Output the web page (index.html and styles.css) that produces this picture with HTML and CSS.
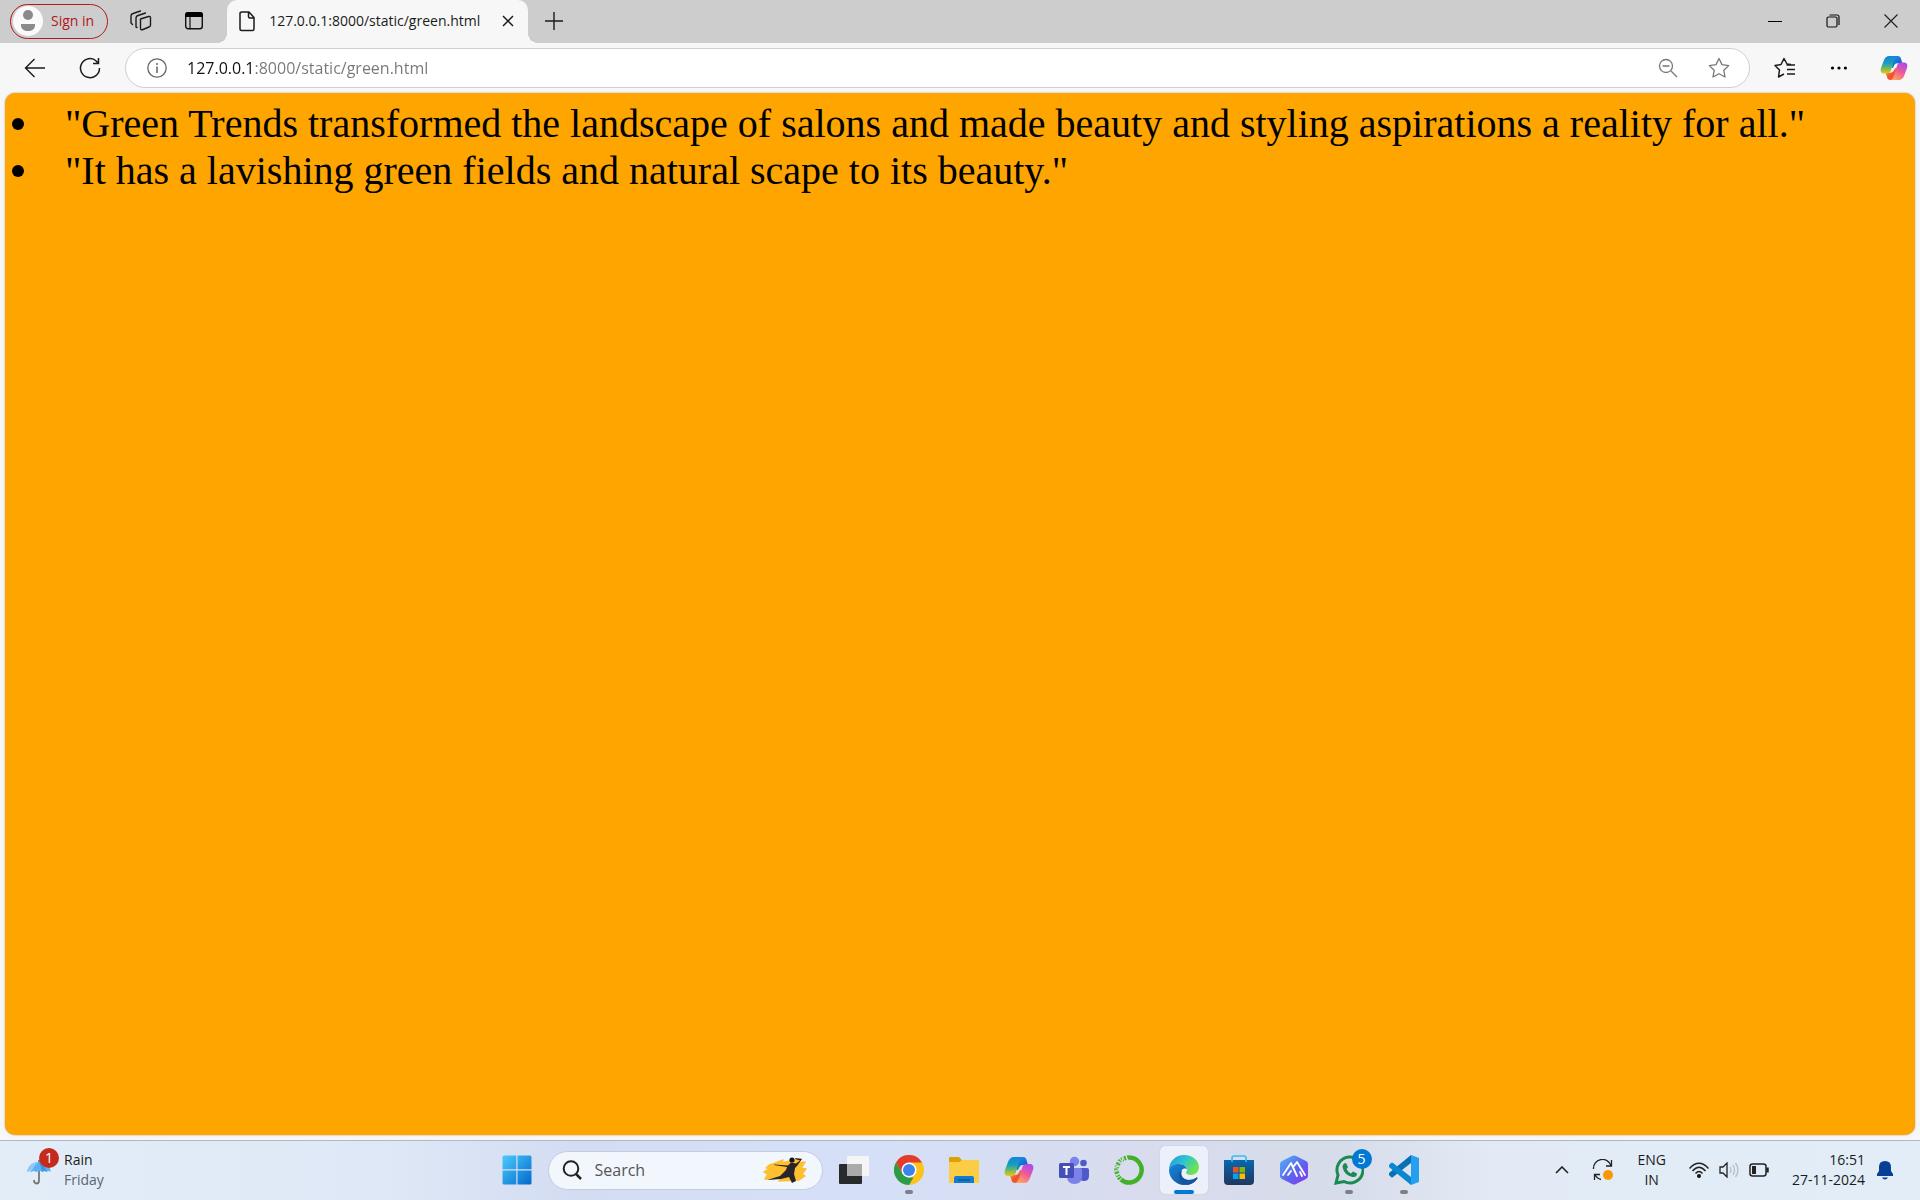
FILE: index.html
```html
<!DOCTYPE html>
<html lang="en">
<head>
<meta charset="utf-8">
<title>127.0.0.1:8000/static/green.html</title>
<link rel="stylesheet" href="styles.css">
</head>
<body>
<svg class="defs" width="0" height="0" aria-hidden="true">
  <defs>
    <linearGradient id="cpLeft" x1="0" y1="0" x2="0" y2="1"><stop offset="0" stop-color="#1784dc"/><stop offset=".4" stop-color="#159ec0"/><stop offset=".7" stop-color="#6fba62"/><stop offset="1" stop-color="#f0c70a"/></linearGradient>
    <linearGradient id="cpTop" x1="0" y1="0" x2="1" y2="1"><stop offset="0" stop-color="#18a6ec"/><stop offset="1" stop-color="#1747c6"/></linearGradient>
    <linearGradient id="cpRight" x1=".8" y1="0" x2=".3" y2="1"><stop offset="0" stop-color="#a64af0"/><stop offset=".5" stop-color="#ec5a9a"/><stop offset="1" stop-color="#ffa45c"/></linearGradient>
    <linearGradient id="cpBottom" x1="0" y1="0" x2="1" y2="1"><stop offset="0" stop-color="#ffb52e"/><stop offset=".5" stop-color="#ee5030"/><stop offset="1" stop-color="#f0705a"/></linearGradient>
    <symbol id="copilot" viewBox="0 0 30 28">
      <path fill="url(#cpTop)" d="M9 1h10c2 0 3 1 3.500 3L24 9h-5c-3 0-4 2-5 5l-5-2z"/>
      <path fill="url(#cpBottom)" d="M21 27H11c-2 0-3-1-3.500-3L6 19h5c3 0 4-2 5-5l5 2z"/>
      <path fill="url(#cpLeft)" d="M10 1h9c-2 0-3 2-4 5l-3 10c-1 3-2 4-5 4H4c-3 0-4-3-3-6L4 6c1-3 3-5 6-5z"/>
      <path fill="url(#cpRight)" d="M20 27h-9c2 0 3-2 4-5l3-10c1-3 2-4 5-4h3c3 0 4 3 3 6l-3 8c-1 3-3 5-6 5z"/>
    </symbol>
  </defs>
</svg>

<header class="tabstrip">
  <button class="signin"><span class="avatar"><svg width="30" height="30" viewBox="0 0 30 30"><circle cx="15" cy="9" r="5" fill="#8a8a8a"/><path d="M8 18h14v1c0 4-3 6-7 6s-7-2-7-6z" fill="#8a8a8a"/></svg></span>Sign in</button>
  <button class="icon-btn strip-btn" aria-label="Workspaces"><svg width="22" height="22" viewBox="0 0 22 22" fill="none" stroke="#1b1b1b" stroke-width="1.400" stroke-linejoin="round" stroke-linecap="round"><path d="M10.500 9l8-2.500q2-.5 2 1.500v7q0 1.500-1.500 2l-6 2.500q-2.500 1-2.500-1.500z"/><path d="M7 17.500l-1-.5V8q0-2 2-2.500L15.500 3"/><path d="M2.500 14.500L1 13V6q0-2 2-2.500L10.500 1"/></svg></button>
  <button class="icon-btn strip-btn" aria-label="Tab actions"><svg width="20" height="20" viewBox="0 0 20 20"><rect x="1.700" y="1.700" width="16.600" height="16" rx="2.500" fill="none" stroke="#111" stroke-width="1.400"/><path d="M1 6V4q0-3 3-3h12q3 0 3 3v2z" fill="#000"/><path d="M6 6v12" stroke="#111" stroke-width="1.200"/></svg></button>
  <div class="tab">
    <svg width="18" height="22" viewBox="0 0 18 22" fill="none" stroke="#1b1b1b" stroke-width="1.500" stroke-linejoin="round"><path d="M4 2h7l5 5.500V19q0 1.500-1.500 1.500h-11Q2 20.500 2 19V3.500Q2 2 4 2zM10.500 2v4.500q0 1.500 1.500 1.500h4"/></svg>
    <span class="tab-title">127.0.0.1:8000/static/green.html</span>
    <button class="icon-btn" aria-label="Close tab"><svg width="12" height="12" viewBox="0 0 12 12" stroke="#1b1b1b" stroke-width="1.500"><path d="M1 1l10 10M11 1L1 11"/></svg></button>
  </div>
  <button class="icon-btn new-tab" aria-label="New tab"><svg width="18" height="18" viewBox="0 0 18 18" stroke="#1b1b1b" stroke-width="1.400"><path d="M9 0v18M0 9h18"/></svg></button>
  <div class="window-controls">
    <button class="icon-btn" aria-label="Minimise"><svg width="14" height="14" viewBox="0 0 14 14" stroke="#000"><path d="M0 7.500h14"/></svg></button>
    <button class="icon-btn" aria-label="Restore"><svg width="14" height="14" viewBox="0 0 14 14" fill="none" stroke="#111" stroke-width="1.200"><rect x="1" y="3" width="10" height="10" rx="1.500"/><path d="M3.500 1H11q2 0 2 2v8"/></svg></button>
    <button class="icon-btn" aria-label="Close"><svg width="14" height="14" viewBox="0 0 14 14" stroke="#222" stroke-width="1.200"><path d="M.5.5l13 13M13.500.5l-13 13"/></svg></button>
  </div>
</header>

<nav class="toolbar">
  <button class="icon-btn tool-btn" aria-label="Back"><svg width="22" height="22" viewBox="0 0 22 22" fill="none" stroke="#1b1b1b" stroke-width="1.400"><path d="M21 11H2M10.500 2L1.500 11l9 9"/></svg></button>
  <button class="icon-btn tool-btn" aria-label="Refresh"><svg width="22" height="22" viewBox="0 0 22 22" fill="none" stroke="#1b1b1b" stroke-width="1.500"><path d="M20.500 11A9.500 9.500 0 1 1 17.500 4.200L19 6M19.500 1v5.500H14"/></svg></button>
  <div class="address">
    <button class="icon-btn" aria-label="Site information"><svg width="20" height="20" viewBox="0 0 20 20" fill="none" stroke="#666" stroke-width="1.300"><circle cx="10" cy="10" r="9.200"/><path d="M10 8.500V15M10 5v2" stroke-width="1.500"/></svg></button>
    <input class="url" type="text" aria-label="Address" value="127.0.0.1:8000/static/green.html">
    <button class="icon-btn" aria-label="Zoom"><svg width="20" height="20" viewBox="0 0 20 20" fill="none" stroke="#777" stroke-width="1.300"><circle cx="8" cy="8" r="6.500"/><path d="M4.500 8h7M13 13l6 6"/></svg></button>
    <button class="icon-btn" aria-label="Add to favourites"><svg width="22" height="22" viewBox="0 0 22 22" fill="none" stroke="#777" stroke-width="1.300" stroke-linejoin="round"><path d="M11 1.500l3 6.100 6.700 1-4.900 4.700 1.200 6.700-6-3.200L5 20l1.200-6.700L1.300 8.600l6.700-1z"/></svg></button>
  </div>
  <div class="toolbar-end">
    <button class="icon-btn" aria-label="Favourites"><svg width="22" height="22" viewBox="0 0 22 22" fill="none" stroke="#1b1b1b" stroke-width="1.500" stroke-linejoin="round"><path d="M17 7.500l-4-.5-3-5.500-3 6-6 1 4.500 4.500L4.500 20l5.500-3M12.500 8H21M13 12.500h8M13 17h8"/></svg></button>
    <button class="icon-btn" aria-label="Settings and more"><svg width="18" height="6" viewBox="0 0 18 6"><circle cx="3.500" cy="3" r="1.600"/><circle cx="10" cy="3" r="1.600"/><circle cx="16.400" cy="3" r="1.600"/></svg></button>
    <button class="icon-btn" aria-label="Copilot"><svg width="28" height="26"><use href="#copilot"/></svg></button>
  </div>
</nav>

<main class="page">
  <ul class="quotes">
    <li>"Green Trends transformed the landscape of salons and made beauty and styling aspirations a reality for all."</li>
    <li>"It has a lavishing green fields and natural scape to its beauty."</li>
  </ul>
</main>

<footer class="taskbar">
  <button class="weather">
    <span class="weather-icon">
      <svg width="26" height="26" viewBox="0 0 26 26"><path d="M13 1v20.500q0 3-2.500 3T8 21" fill="none" stroke="#777" stroke-width="1.800"/><path d="M1 13Q3 3 13 3t12 10q-2-2-4.500 0-2-2-4 0-3-2-6.500 0-2-2-4.500 0-2-2-4.500 0z" fill="#5bb0f2"/><path d="M1 13Q3 3 13 3q-5 3-7.500 10Q3 11 1 13z" fill="#8bcbf8"/><path d="M13 3q6 3 7.500 10-2-2-4 0z" fill="#3997e4"/></svg>
      <span class="badge badge-red">1</span>
    </span>
    <span class="stack"><span>Rain</span><span class="muted">Friday</span></span>
  </button>

  <div class="apps">
    <button class="app" aria-label="Start"><svg width="30" height="30" viewBox="0 0 30 30"><defs><linearGradient id="win" x1="0" y1="0" x2="1" y2="1"><stop offset="0" stop-color="#4ccbfb"/><stop offset="1" stop-color="#0069cc"/></linearGradient></defs><path fill="url(#win)" d="M2 .5h12.300v13.800H.5V2Q.5.5 2 .5zM15.500.5H28q1.500 0 1.500 1.500v12.300h-14zM.5 15.500h13.800v14H2Q.5 29.500.5 28zM15.500 15.500h14V28q0 1.500-1.500 1.500H15.500z"/></svg></button>
    <label class="search">
      <svg width="20" height="20" viewBox="0 0 20 20" fill="none" stroke="#222" stroke-width="2"><circle cx="9" cy="8.500" r="7.300"/><path d="M14 14l5 5" stroke-width="2.500"/></svg>
      <input type="text" placeholder="Search" aria-label="Search">
      <svg width="44" height="28" viewBox="0 0 44 28"><path d="M5 10L20 4l-3 3L38 3l-3 4 7-1-4 6 5 1-4 5 3 2-6 4-20 1 3-3-17 1 3-5-4-2 7-4-5 0 6-4z" fill="#fdc02f" stroke="#fdc02f" stroke-width="1.500" stroke-linejoin="round"/><circle cx="29" cy="4" r="2.600" fill="#17151b"/><path d="M11 8.500l14 1 3-3 5 1 4-3-5-1.500.5-1L39 3l-5 7-2 2-1 6 2 7-4 2-3-6-8 2-14 1 13-4 6-6 1-3-13-2z" fill="#28232d"/></svg>
    </label>
    <button class="app" aria-label="Task view"><svg width="30" height="30" viewBox="0 0 30 30"><rect y="9" width="23" height="20" rx="1" fill="#292a2b"/><rect x="8" y="1" width="22" height="20" rx="1" fill="#f5f5f5"/><path d="M8 9h15v12H8z" fill="#aaa"/></svg></button>
    <button class="app running" aria-label="Chrome"><svg width="30" height="30" viewBox="0 0 30 30"><circle cx="15" cy="15" r="15" fill="#fcc31e"/><path d="M2 7.500A15 15 0 0 1 28 7.500H15L8.500 18.700z" fill="#e33b2e"/><path d="M2 7.500l6.500 11.200L15 22.500h4.500L15 30A15 15 0 0 1 2 7.500z" fill="#2b9c48"/><circle cx="15" cy="15" r="7.500" fill="#fff"/><circle cx="15" cy="15" r="6" fill="#3b82ee"/></svg></button>
    <button class="app" aria-label="File Explorer"><svg width="30" height="28" viewBox="0 0 30 28"><path d="M0 2q0-1 1-1h9l3 3h16q1 0 1 1v7H0z" fill="#dfa006"/><path d="M0 6h10l3-2h16q1 0 1 1v21q0 1-1 1H1q-1 0-1-1z" fill="#fccc44"/><path d="M5 27v-5q0-2 2-2h16q2 0 2 2v5z" fill="#137bcb"/><path d="M9 24h12" stroke="#07539a" stroke-width="1.300"/></svg></button>
    <button class="app" aria-label="Copilot"><svg width="30" height="28"><use href="#copilot"/></svg></button>
    <button class="app" aria-label="Teams"><svg width="30" height="28" viewBox="0 0 30 28"><circle cx="24.500" cy="7" r="3.300" fill="#5059c9"/><path d="M20 12h8q2 0 2 2v6q0 5-5 5t-5-5z" fill="#5059c9"/><circle cx="15.500" cy="5.500" r="4.700" fill="#7b83eb"/><path d="M9 12h12q2 0 2 2v6q0 8-7.500 8T8 20z" fill="#7b83eb"/><rect y="7" width="15" height="15" rx="1.500" fill="#464eb8"/><path d="M4 11h7M7.500 11v8" stroke="#fff" stroke-width="2"/></svg></button>
    <button class="app" aria-label="Anaconda"><svg width="30" height="30" viewBox="0 0 30 30" fill="none" stroke="#43b02a"><path d="M15 2.500a12.500 12.500 0 1 1-8 22" stroke-width="4.500"/><path d="M15 2.500a12.500 12.500 0 0 0-8 22" stroke-width="4.500" stroke-dasharray="2 1"/><path d="M12 1l2 4M8 2l1 5M4 6l4 2M1 11l5 1M1 16l5-2M2 21l5-3" stroke="#dbe4f4"/></svg></button>
    <button class="app active" aria-label="Edge"><svg width="30" height="30" viewBox="0 0 30 30"><defs><linearGradient id="edgeTop" x1="0" y1="0" x2="1" y2=".5"><stop offset="0" stop-color="#2695d9"/><stop offset=".5" stop-color="#2bc3d2"/><stop offset="1" stop-color="#70e34f"/></linearGradient><linearGradient id="edgeBase" x1="0" y1="0" x2="1" y2="1"><stop offset="0" stop-color="#1687dc"/><stop offset="1" stop-color="#124a90"/></linearGradient></defs><path d="M0 15C0 6 7 0 15 0c9 0 15 6 15 12 0 5-4 8-8 8-3 0-5-1-5-2.500 0-1 2-1.500 1-4C17 11 14 9 10 9 5 9 1 11 0 15z" fill="url(#edgeTop)"/><path d="M0 15C1 10 6 9 10 9c5 0 8 3 8 6 0-1-2-2-4-1-5 4-1 11 6 11 3 0 5-1 7-2 1-1 2 0 1 1-2 3-6 6-13 6C7 30 0 23 0 15z" fill="url(#edgeBase)"/><path d="M10 19c-1 6 4 10 9 11 4-1 7-3 9-6 1-1 0-2-1-1-2 1-4 2-7 2-6 0-9-5-7-9-2 0-3 2-3 3z" fill="#14559e"/></svg></button>
    <button class="app" aria-label="Microsoft Store"><svg width="30" height="30" viewBox="0 0 30 30"><defs><linearGradient id="store" x1="0" y1="0" x2="0" y2="1"><stop offset="0" stop-color="#0867b1"/><stop offset="1" stop-color="#20375e"/></linearGradient></defs><path d="M0 5h30v21q0 4-4 4H4q-4 0-4-4z" fill="url(#store)"/><path d="M8 7V3q0-2 2-2h10q2 0 2 2v4" fill="none" stroke="#30c0ef" stroke-width="1.600"/><path d="M9 12h5.500v5.500H9z" fill="#f25022"/><path d="M15.500 12H21v5.500h-5.500z" fill="#7fba00"/><path d="M9 18.500h5.500V24H9z" fill="#00a4ef"/><path d="M15.500 18.500H21V24h-5.500z" fill="#ffb900"/></svg></button>
    <button class="app" aria-label="AI assistant"><svg width="30" height="30" viewBox="0 0 30 30"><defs><linearGradient id="hex" x1="0" y1="0" x2="1" y2="1"><stop offset="0" stop-color="#55b5f2"/><stop offset=".55" stop-color="#5d63ee"/><stop offset="1" stop-color="#8a35f0"/></linearGradient></defs><path d="M13 1q2-1 4 0l10 5q2 1 2 3v12q0 2-2 3l-10 5q-2 1-4 0L3 24q-2-1-2-3V9q0-2 2-3z" fill="url(#hex)"/><path d="M4 20l8-12 6 13M9 20l3-4M15 11l3-4 8 13M21 17l2 4" fill="none" stroke="#fff" stroke-width="1.800" stroke-linecap="round" stroke-linejoin="round"/></svg></button>
    <button class="app running" aria-label="WhatsApp"><svg width="30" height="30" viewBox="0 0 30 30"><path d="M2 28l2-8A13 13 0 1 1 10 26.500z" fill="none" stroke="#198b50" stroke-width="3"/><path d="M10 8.500l2-.5 2 4-1.500 2q1.500 3 4.500 4.500l2-2 4 2q0 4-4.500 3.500Q10 20 8.500 12q0-2 1.500-3.500z" fill="#198b50"/></svg><span class="badge badge-blue">5</span></button>
    <button class="app running" aria-label="Visual Studio Code"><svg width="30" height="30" viewBox="0 0 30 30"><path d="M22 0l8 3v24l-8 3z" fill="#25a0f0"/><path d="M22 0v8L4 22q-1 1-2 0l-2-2q-1-1 0-2z" fill="#0870b5"/><path d="M22 30v-8L4 8Q3 7 2 8l-2 2q-1 1 0 2z" fill="#0b86d1"/></svg></button>
  </div>

  <div class="tray">
    <button class="icon-btn" aria-label="Show hidden icons"><svg width="14" height="8" viewBox="0 0 14 8" fill="none" stroke="#222" stroke-width="1.600"><path d="M1 7l6-6 6 6"/></svg></button>
    <button class="icon-btn" aria-label="Windows Update"><svg width="22" height="22" viewBox="0 0 22 22" fill="none" stroke="#222" stroke-width="1.300"><path d="M1.500 10A9 9 0 0 1 19 6.500M19.500 1v6H14M9 20.500A9 9 0 0 1 3 15.500M2.500 21v-5.500H8"/><circle cx="16" cy="16" r="5" fill="#fc9607" stroke="none"/></svg></button>
    <button class="stack centered"><span>ENG</span><span>IN</span></button>
    <button class="status" aria-label="Network, volume and battery">
      <svg width="20" height="16" viewBox="0 0 20 16" fill="none" stroke="#222" stroke-width="1.400"><path d="M.5 6.500q9.500-10.500 19 0M3.500 9q6.500-7.500 13 0M6.500 11.500q3.500-4 7 0"/><circle cx="10" cy="14" r="2" fill="#111" stroke="none"/></svg>
      <svg width="20" height="16" viewBox="0 0 20 16" fill="none" stroke="#222" stroke-width="1.300"><path d="M1 5h3l4-4v14l-4-4H1z"/><path d="M11 5q2 3 0 6M14 3q3 5 0 10M16.500 1q5 7 0 14" stroke="#b6bdc5"/></svg>
      <svg width="20" height="16" viewBox="0 0 20 16" fill="none" stroke="#222" stroke-width="1.500"><rect x="1" y="2" width="16" height="12" rx="2.500"/><rect x="3" y="4" width="4" height="8" fill="#222" stroke="none"/><path d="M18.500 5.500v5" stroke-width="2.500"/></svg>
    </button>
    <button class="stack right"><span>16:51</span><span>27-11-2024</span></button>
    <button class="icon-btn bell" aria-label="Notifications"><svg width="16" height="20" viewBox="0 0 16 20" fill="#063f95"><path d="M0 16v-2l2-3V7q0-6 6-6t6 6v4l2 3v2zM5 17.500h6q-1 2-3 2t-3-2z"/></svg></button>
  </div>
</footer>
</body>
</html>
```
FILE: styles.css
```css
* { box-sizing: border-box; }

body {
  display: flex;
  flex-direction: column;
  min-height: 100vh;
  margin: 0;
  background: #f7f7f7;
  color: #1b1b1b;
  font: 14px/20px "Open Sans", "Noto Sans", sans-serif;
}

button {
  padding: 0;
  border: 0;
  background: none;
  color: inherit;
  font: inherit;
}

input {
  min-width: 0;
  padding: 0;
  border: 0;
  outline: 0;
  background: none;
  font: inherit;
}

svg { display: block; flex: none; }
.defs { position: absolute; }
.icon-btn { display: grid; place-items: center; flex: none; }

/* Tab strip */
.tabstrip {
  display: flex;
  align-items: center;
  height: 43px;
  padding: 0 22px 1px 10px;
  background: #cdcdcd;
}
.signin {
  display: flex;
  align-items: center;
  gap: 8px;
  height: 35px;
  padding: 0 13px 0 2px;
  border: 1px solid #b3161b;
  border-radius: 18px;
  color: #b3161b;
}
.avatar { border-radius: 50%; background: #fafafa; }
.strip-btn { width: 22px; margin-left: 22px; }
.strip-btn + .strip-btn { margin-left: 31px; }
.tab {
  position: relative;
  display: flex;
  align-items: center;
  align-self: flex-start;
  width: 301px;
  height: 43px;
  margin-left: 22px;
  padding: 0 14px 1px 11px;
  border-radius: 10px 10px 0 0;
  background: #f7f7f7;
}
.tab::before,
.tab::after {
  content: "";
  position: absolute;
  bottom: 0;
  width: 10px;
  height: 10px;
}
.tab::before { right: 100%; background: radial-gradient(circle at 0 0, #cdcdcd 10px, #f7f7f7 10px); }
.tab::after { left: 100%; background: radial-gradient(circle at 100% 0, #cdcdcd 10px, #f7f7f7 10px); }
.tab-title { flex: 1; padding-left: 13px; white-space: nowrap; }
.new-tab { margin-left: 17px; }
.window-controls { display: flex; gap: 44px; margin-left: auto; }

/* Toolbar */
.toolbar {
  display: flex;
  align-items: center;
  height: 50px;
  padding: 0 12px 1px 24px;
}
.tool-btn { margin-right: 33px; }
.tool-btn + .tool-btn { margin-right: 24px; }
.address {
  display: flex;
  flex: 1;
  align-items: center;
  gap: 30px;
  height: 40px;
  padding: 0 19px 0 21px;
  border: 1px solid #cfcfcf;
  border-radius: 20px;
  background: #fff;
}
.url {
  flex: 1;
  height: 24px;
  margin-left: -10px;
  background: linear-gradient(to right, #111 68px, #777 68px);
  background-clip: text;
  -webkit-background-clip: text;
  -webkit-text-fill-color: transparent;
  font-size: 16px;
}
.toolbar-end { display: flex; align-items: center; gap: 33px; padding-left: 24px; }

/* Page shown in the browser */
.page {
  flex: 1;
  margin: 0 5px 5px;
  padding: 7px;
  border-radius: 10px;
  background: orange;
  box-shadow: 0 0 2px #999;
  color: #000;
}
.quotes {
  margin: 0;
  padding: 0;
  list-style: none;
  font: 40px/47px "Liberation Serif", serif;
}
.quotes li { display: flex; align-items: center; }
.quotes li::before {
  content: "";
  flex: none;
  width: 12px;
  height: 12px;
  margin-right: 41px;
  border-radius: 50%;
  background: #000;
}

/* Taskbar */
.taskbar {
  display: grid;
  grid-template-columns: 1fr auto 1fr;
  align-items: center;
  height: 60px;
  padding-bottom: 1px;
  border-top: 1px solid #aeb8c6;
  background: linear-gradient(to right, #e3edf8, #dfe8f6 20%, #d4dcf2 30%, #d5e0f8 45%, #d8dcee 58%, #d7dcea 70%, #e2ebf5 78%, #e2edf8);
}
.weather { display: flex; align-items: center; justify-self: start; gap: 12px; padding-left: 26px; text-align: left; }
.weather-icon { position: relative; padding-top: 4px; }
.stack { display: flex; flex-direction: column; }
.muted { color: #5c6670; }
.centered { align-items: center; }
.right { align-items: flex-end; }
.badge {
  position: absolute;
  width: 20px;
  height: 20px;
  border-radius: 50%;
  color: #fff;
  text-align: center;
}
.badge-red { top: -7px; left: 13px; background: #c42b1c; }
.badge-blue { top: 3px; right: 1px; background: #0078d4; }

.apps { display: flex; align-items: center; gap: 7px; }
.app {
  position: relative;
  display: grid;
  place-items: center;
  width: 48px;
  height: 48px;
  border-radius: 5px;
}
.app.active { background: #ebf0fa; box-shadow: 0 0 1px #aab; }
.running::after,
.active::after {
  content: "";
  position: absolute;
  bottom: 0;
  width: 8px;
  height: 4px;
  border-radius: 2px;
  background: #7d8086;
}
.active::after { width: 20px; background: #0078d4; }
.search {
  display: flex;
  align-items: center;
  gap: 13px;
  width: 275px;
  height: 39px;
  padding: 0 15px 0 13px;
  border: 1px solid #c3cde2;
  border-radius: 20px;
  background: #f2f6fd;
}
.search input { flex: 1; font-size: 16px; }
.search input::placeholder { color: #555; opacity: 1; }

.tray { display: flex; align-items: center; justify-self: end; gap: 23px; padding-right: 27px; }
.status { display: flex; gap: 10px; }
.bell { margin-left: -11px; }
```
